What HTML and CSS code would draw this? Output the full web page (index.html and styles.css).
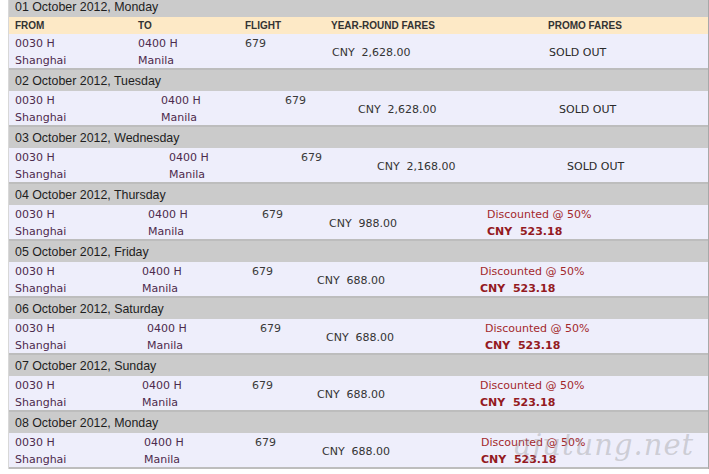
FILE: index.html
```html
<!DOCTYPE html>
<html>
<head>
<meta charset="utf-8">
<link rel="stylesheet" href="styles.css">
</head>
<body>
<div class="schedule">
  <section class="day d1">
    <div class="date">01 October 2012, Monday</div>
    <div class="cols grid"><span>FROM</span><span>TO</span><span>FLIGHT</span><span>YEAR-ROUND FARES</span><span>PROMO FARES</span></div>
    <div class="row grid">
      <div class="place"><div>0030 H</div><div>Shanghai</div></div>
      <div class="place"><div>0400 H</div><div>Manila</div></div>
      <div class="flight">679</div>
      <div class="fare">CNY&nbsp; 2,628.00</div>
      <div class="promo">SOLD OUT</div>
    </div>
  </section>
  <section class="day d2">
    <div class="date">02 October 2012, Tuesday</div>
    <div class="row grid">
      <div class="place"><div>0030 H</div><div>Shanghai</div></div>
      <div class="place"><div>0400 H</div><div>Manila</div></div>
      <div class="flight">679</div>
      <div class="fare">CNY&nbsp; 2,628.00</div>
      <div class="promo">SOLD OUT</div>
    </div>
  </section>
  <section class="day d3">
    <div class="date">03 October 2012, Wednesday</div>
    <div class="row grid">
      <div class="place"><div>0030 H</div><div>Shanghai</div></div>
      <div class="place"><div>0400 H</div><div>Manila</div></div>
      <div class="flight">679</div>
      <div class="fare">CNY&nbsp; 2,168.00</div>
      <div class="promo">SOLD OUT</div>
    </div>
  </section>
  <section class="day d4">
    <div class="date">04 October 2012, Thursday</div>
    <div class="row grid">
      <div class="place"><div>0030 H</div><div>Shanghai</div></div>
      <div class="place"><div>0400 H</div><div>Manila</div></div>
      <div class="flight">679</div>
      <div class="fare">CNY&nbsp; 988.00</div>
      <div class="promo disc"><div>Discounted @ 50%</div><div class="deal">CNY&nbsp; 523.18</div></div>
    </div>
  </section>
  <section class="day d5">
    <div class="date">05 October 2012, Friday</div>
    <div class="row grid">
      <div class="place"><div>0030 H</div><div>Shanghai</div></div>
      <div class="place"><div>0400 H</div><div>Manila</div></div>
      <div class="flight">679</div>
      <div class="fare">CNY&nbsp; 688.00</div>
      <div class="promo disc"><div>Discounted @ 50%</div><div class="deal">CNY&nbsp; 523.18</div></div>
    </div>
  </section>
  <section class="day d6">
    <div class="date">06 October 2012, Saturday</div>
    <div class="row grid">
      <div class="place"><div>0030 H</div><div>Shanghai</div></div>
      <div class="place"><div>0400 H</div><div>Manila</div></div>
      <div class="flight">679</div>
      <div class="fare">CNY&nbsp; 688.00</div>
      <div class="promo disc"><div>Discounted @ 50%</div><div class="deal">CNY&nbsp; 523.18</div></div>
    </div>
  </section>
  <section class="day d7">
    <div class="date">07 October 2012, Sunday</div>
    <div class="row grid">
      <div class="place"><div>0030 H</div><div>Shanghai</div></div>
      <div class="place"><div>0400 H</div><div>Manila</div></div>
      <div class="flight">679</div>
      <div class="fare">CNY&nbsp; 688.00</div>
      <div class="promo disc"><div>Discounted @ 50%</div><div class="deal">CNY&nbsp; 523.18</div></div>
    </div>
  </section>
  <section class="day d8">
    <div class="date">08 October 2012, Monday</div>
    <div class="row grid">
      <div class="place"><div>0030 H</div><div>Shanghai</div></div>
      <div class="place"><div>0400 H</div><div>Manila</div></div>
      <div class="flight">679</div>
      <div class="fare">CNY&nbsp; 688.00</div>
      <div class="promo disc"><div>Discounted @ 50%</div><div class="deal">CNY&nbsp; 523.18</div></div>
    </div>
    <div class="watermark">ajutung.net</div>
  </section>
</div>
</body>
</html>
```
FILE: styles.css
```css
html, body {
  margin: 0;
  padding: 0;
  background: #ffffff;
}
body {
  padding-left: 8px;
  overflow: hidden;
}
.schedule {
  width: 699px;
  margin-top: -4px;
  border-left: 1px solid #d8d8d8;
  border-right: 1px solid #a8a8a8;
  font-family: "DejaVu Sans", Verdana, sans-serif;
  font-size: 11px;
  color: #333;
}
.day {
  position: relative;
  border-bottom: 2px solid #bdbdbd;
}
.date {
  height: 21px;
  line-height: 22px;
  background: #cbcbcb;
  padding-left: 6px;
  font-family: "Liberation Sans", Arial, sans-serif;
  font-size: 12.4px;
  color: #1e1e1e;
}
.grid {
  display: grid;
  padding-left: 6px;
  grid-template-columns: var(--cols);
  align-items: center;
}
.cols {
  height: 17px;
  background: #fde9c6;
  font-family: "Liberation Sans", Arial, sans-serif;
  font-weight: bold;
  font-size: 10px;
  color: #333;
  line-height: 17px;
}
.row {
  box-sizing: border-box;
  height: 34px;
  padding-top: 1px;
  background: #eeeefb;
  line-height: 17px;
}
.place {
  color: #4d2a4d;
}
.flight {
  align-self: start;
  color: #3a3a3a;
}
.fare {
  color: #333;
}
.promo {
  color: #2a2a2a;
}
.disc {
  color: #a3282b;
}
.deal {
  font-weight: bold;
  color: #941a1f;
}
.d1 { --cols: 123px 107px 86px 217px 1fr; }
.d1 .fare { padding-left: 1px; }
.d1 .promo { padding-left: 1px; }
.d2 { --cols: 146px 124px 73px 201px 1fr; }
.d3 { --cols: 154px 132px 76px 190px 1fr; }
.d4 { --cols: 133px 114px 67px 158px 1fr; }
.d5 { --cols: 127px 110px 65px 163px 1fr; }
.d6 { --cols: 132px 113px 66px 159px 1fr; }
.d7 { --cols: 127px 110px 65px 163px 1fr; }
.d8 { --cols: 129px 111px 67px 159px 1fr; }
.watermark {
  position: absolute;
  left: 505px;
  top: 16px;
  font-family: "DejaVu Serif", serif;
  font-style: italic;
  font-size: 29px;
  letter-spacing: 1px;
  color: rgba(150, 150, 150, 0.38);
  pointer-events: none;
}
```
